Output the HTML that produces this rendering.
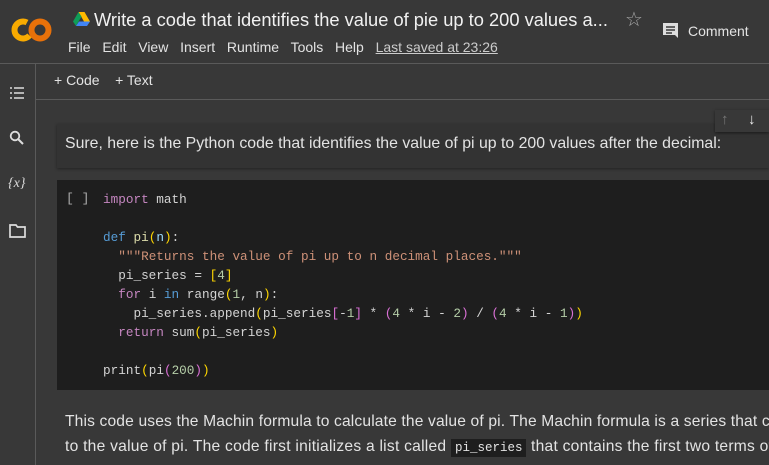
<!DOCTYPE html>
<html><head><style>
body{margin:0;width:769px;height:465px;background:#383838;font-family:"Liberation Sans",sans-serif;color:#e3e3e3;overflow:hidden;position:relative}
.a{position:absolute;white-space:nowrap}
pre{margin:0;font-family:"Liberation Mono",monospace;font-size:12.7px;line-height:19px;color:#d4d4d4;white-space:pre !important}
.k{color:#c586c0}.b{color:#569cd6}.f{color:#dcdcaa}.s{color:#ce9178}.n{color:#b5cea8}.y{color:#ffd700}.p{color:#da70d6}.v{color:#9cdcfe}.c{color:#179fff}
</style></head><body>
<svg class="a" style="left:11px;top:16px" width="42" height="28" viewBox="0 0 42 28">
<circle cx="12" cy="14" r="8.5" fill="none" stroke="#f9ab00" stroke-width="6" stroke-dasharray="38 20" transform="rotate(40 12 14)"/>
<circle cx="29" cy="14" r="8.5" fill="none" stroke="#e8710a" stroke-width="6"/>
</svg>
<svg class="a" style="left:73px;top:12px" width="17" height="14" viewBox="0 0 17 14"><path d="M5.5 0h6l5.5 9.5h-6z" fill="#ffba00"/><path d="M5.5 0L0 9.5l3 4.5 5.5-9.5z" fill="#0f9d58"/><path d="M3 14h11l3-4.5H6z" fill="#4285f4"/></svg>
<div class="a" style="left:94px;top:9px;font-size:18.3px;color:#f1f1f1">Write a code that identifies the value of pie up to 200 values a...</div>
<div class="a" style="left:625px;top:7px;font-size:20px;color:#aaa">☆</div>
<svg class="a" style="left:662px;top:22px" width="17" height="17" viewBox="0 0 17 17"><path d="M1 1h15v15l-3-3H1z" fill="#ddd"/><path d="M4 5h9M4 8h9M4 11h6" stroke="#383838" stroke-width="1.5"/></svg>
<div class="a" style="left:688px;top:23px;font-size:14px">Comment</div>
<div class="a" style="left:68px;top:39px;font-size:14px;word-spacing:2px">File&nbsp; Edit&nbsp; View&nbsp; Insert&nbsp; Runtime&nbsp; Tools&nbsp; Help&nbsp; <span style="text-decoration:underline;color:#ccc;word-spacing:0">Last saved at 23:26</span></div>
<div class="a" style="left:0;top:63px;width:769px;height:1px;background:#5a5a5a"></div>
<div class="a" style="left:35px;top:99px;width:734px;height:1px;background:#5a5a5a"></div>
<div class="a" style="left:35px;top:64px;width:1px;height:401px;background:#5a5a5a"></div>
<div class="a" style="left:54px;top:72px;font-size:14px">+ Code&nbsp;&nbsp;&nbsp; + Text</div>
<svg class="a" style="left:9px;top:87px" width="16" height="12"><path d="M1 1h2M5 1h10M1 6h2M5 6h10M1 11h2M5 11h10" stroke="#ddd" stroke-width="1.6"/></svg>
<svg class="a" style="left:9px;top:130px" width="16" height="16"><circle cx="6" cy="6" r="4.3" fill="none" stroke="#ddd" stroke-width="1.8"/><path d="M9 9l5 5" stroke="#ddd" stroke-width="2"/></svg>
<div class="a" style="left:8px;top:176px;font-size:14px;font-family:'Liberation Serif',serif;font-style:italic;color:#ddd">{<i>x</i>}</div>
<svg class="a" style="left:9px;top:224px" width="17" height="14"><path d="M1 1h6l1.5 2H16v10H1z" fill="none" stroke="#ddd" stroke-width="1.7"/></svg>
<div class="a" style="left:57px;top:124px;width:712px;height:44px;background:#333;box-shadow:0 1px 3px rgba(0,0,0,.4)"></div>
<div class="a" style="left:715px;top:110px;width:54px;height:22px;background:#383838;box-shadow:0 1px 3px rgba(0,0,0,.5)"></div>
<div class="a" style="left:721px;top:111px;font-size:15px;color:#777">↑</div>
<div class="a" style="left:748px;top:111px;font-size:15px;color:#eee">↓</div>
<div class="a" style="left:65px;top:135px;font-size:15.85px;color:#e3e3e3">Sure, here is the Python code that identifies the value of pi up to 200 values after the decimal:</div>
<div class="a" style="left:57px;top:180px;width:712px;height:210px;background:#1e1e1e"></div>
<div class="a" style="left:66px;top:191px;font-family:'Liberation Mono',monospace;font-size:13px;color:#aaa">[ ]</div>
<pre class="a" style="left:103px;top:190px"><span class="k">import</span> math

<span class="b">def</span> <span class="f">pi</span><span class="y">(</span><span class="v">n</span><span class="y">)</span>:
  <span class="s">"""Returns the value of pi up to n decimal places."""</span>
  pi_series = <span class="y">[</span><span class="n">4</span><span class="y">]</span>
  <span class="k">for</span> i <span class="b">in</span> range<span class="y">(</span><span class="n">1</span>, n<span class="y">)</span>:
    pi_series.append<span class="y">(</span>pi_series<span class="p">[</span>-<span class="n">1</span><span class="p">]</span> * <span class="p">(</span><span class="n">4</span> * i - <span class="n">2</span><span class="p">)</span> / <span class="p">(</span><span class="n">4</span> * i - <span class="n">1</span><span class="p">)</span><span class="y">)</span>
  <span class="k">return</span> sum<span class="y">(</span>pi_series<span class="y">)</span>

print<span class="y">(</span>pi<span class="p">(</span><span class="n">200</span><span class="p">)</span><span class="y">)</span></pre>
<div class="a" style="left:65px;top:413px;font-size:15.6px;letter-spacing:0.15px">This code uses the Machin formula to calculate the value of pi. The Machin formula is a series that converges</div>
<div class="a" style="left:65px;top:438px;font-size:15.6px;letter-spacing:0.25px">to the value of pi. The code first initializes a list called <span style="font-family:'Liberation Mono',monospace;font-size:12.5px;background:#1e1e1e;padding:2px 4px;letter-spacing:0">pi_series</span> that contains the first two terms of</div>
</body></html>
